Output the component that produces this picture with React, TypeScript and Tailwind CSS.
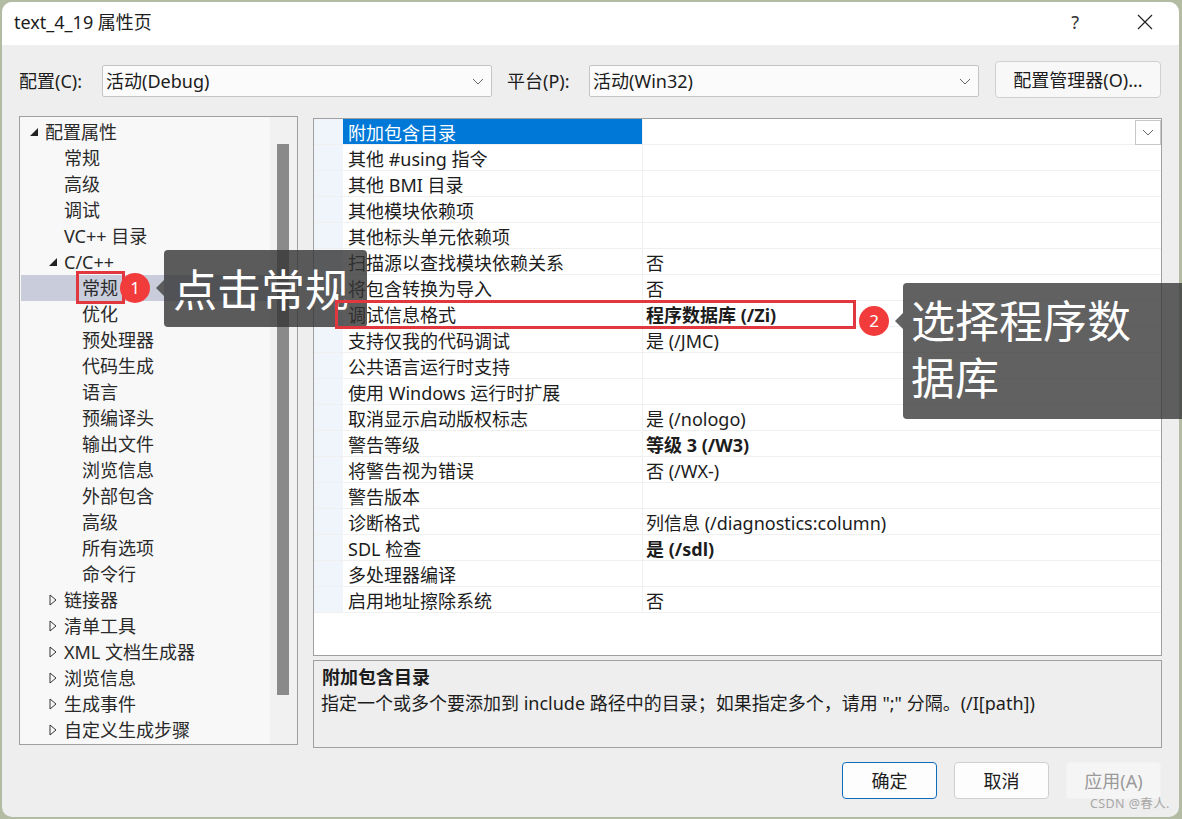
const font = "font-['Noto_Sans','Noto_Sans_CJK_SC',sans-serif]"

type TreeItem = { label: string; indent: number; arrow?: "open" | "closed"; selected?: boolean }

const treeItems: TreeItem[] = [
  { label: "配置属性", indent: 0, arrow: "open" },
  { label: "常规", indent: 1 },
  { label: "高级", indent: 1 },
  { label: "调试", indent: 1 },
  { label: "VC++ 目录", indent: 1 },
  { label: "C/C++", indent: 1, arrow: "open" },
  { label: "常规", indent: 2, selected: true },
  { label: "优化", indent: 2 },
  { label: "预处理器", indent: 2 },
  { label: "代码生成", indent: 2 },
  { label: "语言", indent: 2 },
  { label: "预编译头", indent: 2 },
  { label: "输出文件", indent: 2 },
  { label: "浏览信息", indent: 2 },
  { label: "外部包含", indent: 2 },
  { label: "高级", indent: 2 },
  { label: "所有选项", indent: 2 },
  { label: "命令行", indent: 2 },
  { label: "链接器", indent: 1, arrow: "closed" },
  { label: "清单工具", indent: 1, arrow: "closed" },
  { label: "XML 文档生成器", indent: 1, arrow: "closed" },
  { label: "浏览信息", indent: 1, arrow: "closed" },
  { label: "生成事件", indent: 1, arrow: "closed" },
  { label: "自定义生成步骤", indent: 1, arrow: "closed" },
]

const gridRows: { name: string; value?: string; bold?: boolean }[] = [
  { name: "附加包含目录" },
  { name: "其他 #using 指令" },
  { name: "其他 BMI 目录" },
  { name: "其他模块依赖项" },
  { name: "其他标头单元依赖项" },
  { name: "扫描源以查找模块依赖关系", value: "否" },
  { name: "将包含转换为导入", value: "否" },
  { name: "调试信息格式", value: "程序数据库 (/Zi)", bold: true },
  { name: "支持仅我的代码调试", value: "是 (/JMC)" },
  { name: "公共语言运行时支持" },
  { name: "使用 Windows 运行时扩展" },
  { name: "取消显示启动版权标志", value: "是 (/nologo)" },
  { name: "警告等级", value: "等级 3 (/W3)", bold: true },
  { name: "将警告视为错误", value: "否 (/WX-)" },
  { name: "警告版本" },
  { name: "诊断格式", value: "列信息 (/diagnostics:column)" },
  { name: "SDL 检查", value: "是 (/sdl)", bold: true },
  { name: "多处理器编译" },
  { name: "启用地址擦除系统", value: "否" },
]

function Chevron() {
  return (
    <svg width="12" height="7" viewBox="0 0 12 7" fill="none" stroke="#666" strokeWidth="1">
      <path d="M1 1l5 5 5-5" />
    </svg>
  )
}

function Select({ text, width }: { text: string; width: string }) {
  return (
    <div className={`${width} mt-[3px] h-8 flex items-center justify-between pl-[3px] pr-[7px] bg-[#fbfbfb] border border-[#c4c4c4] rounded-[2px]`}>
      <span>{text}</span>
      <Chevron />
    </div>
  )
}

function TreeRow({ item }: { item: TreeItem }) {
  let left = "pl-[61px]"
  if (item.indent === 0) left = "pl-[8px]"
  if (item.indent === 1) left = item.arrow ? "pl-[27px]" : "pl-[43px]"
  return (
    <div className={`h-[26px] flex items-center ${left} ${item.selected ? "bg-[#c9ccdb]" : ""}`}>
      {item.arrow === "open" && (
        <svg width="10" height="10" viewBox="0 0 10 10" className="mr-[6px] shrink-0">
          <path d="M9 1v8H1z" fill="#222" />
        </svg>
      )}
      {item.arrow === "closed" && (
        <svg width="8" height="12" viewBox="0 0 8 12" className="ml-[1px] mr-[7px] shrink-0" fill="none" stroke="#333">
          <path d="M1 1l6 5-6 5z" />
        </svg>
      )}
      <span className="whitespace-pre">{item.label}</span>
    </div>
  )
}

function Action({ label, kind }: { label: string; kind?: "primary" | "disabled" }) {
  const look =
    kind === "primary"
      ? "border-[#0f6cbd] bg-[#fdfdfd]"
      : kind === "disabled"
        ? "border-[#f2f2f2] bg-[#f5f5f5] text-[#9a9a9a]"
        : "border-[#cfcfcf] bg-[#fdfdfd]"
  return <button className={`w-[95px] h-[37px] border rounded-[4px] text-[18px] ${look}`}>{label}</button>
}

export default function App() {
  return (
    <div className={`relative w-[1182px] h-[819px] overflow-hidden bg-[#b3bca3] pt-[2px] pl-[2px] pr-[3px] pb-[2px] text-[18px] leading-[26px] text-[#1c1c1c] ${font}`}>
      <div className="h-full flex flex-col bg-[#eeeeee] rounded-[10px] overflow-hidden">
        <div className="h-[43px] shrink-0 bg-white flex items-center pl-[12px] pr-[26px] pb-[3px]">
          <span className="flex-1">text_4_19 属性页</span>
          <span className="mr-[58px] text-[#333]">?</span>
          <svg width="16" height="16" viewBox="0 0 16 16" fill="none" stroke="#222" strokeWidth="1.2">
            <path d="M1 1l14 14M15 1L1 15" />
          </svg>
        </div>

        <div className="flex items-center h-[37px] mt-[16px] pl-[17px]">
          <span className="w-[83px] mt-[3px]">配置(C):</span>
          <Select text="活动(Debug)" width="w-[390px]" />
          <span className="w-[97px] mt-[3px] pl-[15px]">平台(P):</span>
          <Select text="活动(Win32)" width="w-[390px]" />
          <button className="ml-[16px] w-[166px] h-[37px] bg-[#f8f8f8] border border-[#d0d0d0] rounded-[4px]">配置管理器(O)...</button>
        </div>

        <div className="flex mt-[18px] pl-[17px]">
          <div className="w-[279px] h-[629px] border border-[#a0a0a0] bg-[#f8f8f8] flex">
            <div className="w-[250px] pt-[2px] pl-[1px] text-[#2a2a2a]">
              {treeItems.map((item, i) => (
                <TreeRow key={i} item={item} />
              ))}
            </div>
            <div className="flex-1 bg-[#f1f1f1] pl-[7px] pr-[8px] pt-[27px]">
              <div className="h-[551px] bg-[#8a8a8a]" />
            </div>
          </div>

          <div className="ml-[15px] w-[849px] flex flex-col pt-[2px]">
            <div className="relative h-[538px] border border-[#a0a0a0] bg-white">
              <div className="w-[847px] bg-white">
                {gridRows.map((row, i) => (
                  <div key={i} className="h-[26px] flex border-b border-[#f0f0f0] bg-[#f0f4fb]">
                    <div className="w-[29px] shrink-0" />
                    <div className={`w-[299px] shrink-0 pl-[5px] pt-[1px] whitespace-nowrap ${i === 0 ? "bg-[#0078d7] text-white" : "bg-white"}`}>
                      {row.name}
                    </div>
                    <div className={`flex-1 pl-[3px] pt-[1px] bg-white border-l border-[#f0f0f0] ${row.bold ? "font-bold" : ""}`}>
                      {row.value}
                    </div>
                  </div>
                ))}
              </div>
              <div className="absolute top-[1px] right-0 w-[26px] h-[25px] bg-white border border-[#c8c8c8] flex items-center justify-center">
                <Chevron />
              </div>
            </div>
            <div className="mt-[4px] h-[88px] border border-[#a0a0a0] pl-[7px] pt-[3px]">
              <div className="font-bold pl-[1px]">附加包含目录</div>
              <div>指定一个或多个要添加到 include 路径中的目录；如果指定多个，请用 ";" 分隔。(/I[path])</div>
            </div>
          </div>
        </div>

        <div className="flex justify-end gap-[17px] mt-[14px] pr-[18px]">
          <Action label="确定" kind="primary" />
          <Action label="取消" />
          <Action label="应用(A)" kind="disabled" />
        </div>
      </div>

      {/* annotation 1 */}
      <div className="absolute left-[76px] top-[271px] w-[49px] h-[33px] border-[3px] border-[#e0383e]" />
      <div className="absolute left-[120px] top-[273px] w-[30px] h-[30px] rounded-full bg-[#f23c3c] text-white text-[17px] leading-[30px] text-center">1</div>
      <div className="absolute left-[156px] top-[280px] w-0 h-0 border-y-[8px] border-y-transparent border-r-[8px] border-r-[#5c5c5c]" />
      <div className="absolute left-[164px] top-[250px] w-[203px] h-[77px] rounded-[4px] bg-[#333333]/80 text-white text-[44px] leading-[80px] pl-[9px] whitespace-nowrap">点击常规</div>

      {/* annotation 2 */}
      <div className="absolute left-[335px] top-[300px] w-[521px] h-[29px] border-[3px] border-[#e0383e]" />
      <div className="absolute left-[859px] top-[306px] w-[30px] h-[30px] rounded-full bg-[#f23c3c] text-white text-[17px] leading-[30px] text-center">2</div>
      <div className="absolute left-[895px] top-[313px] w-0 h-0 border-y-[8px] border-y-transparent border-r-[8px] border-r-[#636363]" />
      <div className="absolute left-[903px] top-[283px] w-[279px] h-[136px] rounded-l-[4px] bg-[#3a3a3a]/80 text-white text-[44px] leading-[57px] pl-[8px] pr-[30px] pt-[10px]">选择程序数据库</div>

      <div className="absolute left-[1090px] top-[795px] text-[12.5px] leading-[18px] text-[#a8a8a8] whitespace-nowrap tracking-[0.4px]">CSDN @春人.</div>
    </div>
  )
}
